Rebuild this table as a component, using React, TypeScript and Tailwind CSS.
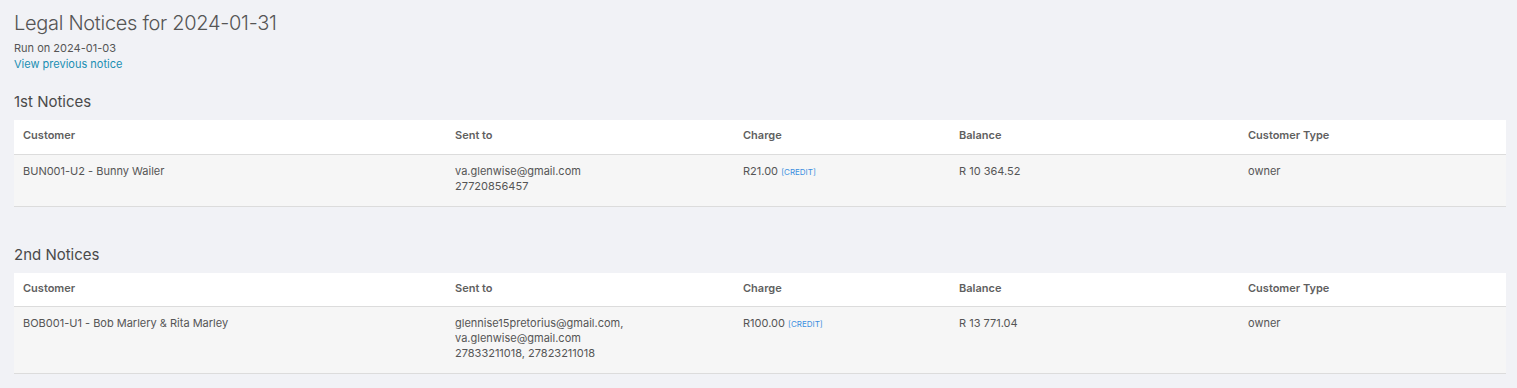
import { Fragment } from 'react';

interface NoticeRow {
  customer: string;
  sentTo: string[];
  charge: string;
  balance: string;
  customerType: string;
}

interface NoticeGroup {
  title: string;
  rows: NoticeRow[];
}

const groups: NoticeGroup[] = [
  {
    title: '1st Notices',
    rows: [
      {
        customer: 'BUN001-U2 - Bunny Wailer',
        sentTo: ['va.glenwise@gmail.com', '27720856457'],
        charge: 'R21.00',
        balance: 'R 10 364.52',
        customerType: 'owner',
      },
    ],
  },
  {
    title: '2nd Notices',
    rows: [
      {
        customer: 'BOB001-U1 - Bob Marlery & Rita Marley',
        sentTo: ['glennise15pretorius@gmail.com,', 'va.glenwise@gmail.com', '27833211018, 27823211018'],
        charge: 'R100.00',
        balance: 'R 13 771.04',
        customerType: 'owner',
      },
    ],
  },
];

const cols = ['Customer', 'Sent to', 'Charge', 'Balance', 'Customer Type'];
const widths = ['w-[432px]', 'w-[288px]', 'w-[216px]', 'w-[289px]', ''];

function NoticeTable({ group }: { group: NoticeGroup }) {
  return (
    <section>
      <h2 className="mb-[8px] text-[15px] leading-[20px] text-[#4a4a4a]">{group.title}</h2>
      <table className="w-full table-fixed border-collapse text-[11px]">
        <thead>
          <tr className="bg-white">
            {cols.map((c, i) => (
              <th
                key={c}
                className={`${widths[i]} h-[34px] px-[9px] pb-[3px] text-left align-middle font-semibold text-[#5f5f5f]`}
              >
                {c}
              </th>
            ))}
          </tr>
        </thead>
        <tbody>
          {group.rows.map((r) => (
            <tr key={r.customer} className="border-y border-[#dcdcdc] bg-[#f6f6f6] align-top text-[#555]">
              <td className="px-[9px] pt-[9px] pb-[12px] leading-[15px]">{r.customer}</td>
              <td className="px-[9px] pt-[9px] pb-[12px] leading-[15px]">
                {r.sentTo.map((s, i) => (
                  <Fragment key={s}>
                    {i > 0 && <br />}
                    {s}
                  </Fragment>
                ))}
              </td>
              <td className="px-[9px] pt-[9px] pb-[12px] leading-[15px]">
                {r.charge} <span className="text-[8px] text-[#3b8fe0]">[CREDIT]</span>
              </td>
              <td className="px-[9px] pt-[9px] pb-[12px] leading-[15px]">{r.balance}</td>
              <td className="px-[9px] pt-[9px] pb-[12px] leading-[15px]">{r.customerType}</td>
            </tr>
          ))}
        </tbody>
      </table>
    </section>
  );
}

export default function App() {
  return (
    <div className="min-h-[388px] bg-[#f1f2f6] pr-[11px] pl-[14px] pt-[8px] font-['Inter',sans-serif]">
      <h1 className="text-[20px] leading-[30px] font-light tracking-[-0.015em] text-[#555]">
        Legal Notices for 2024-01-31
      </h1>
      <p className="mt-[2px] text-[11px] leading-[16px] text-[#555]">Run on 2024-01-03</p>
      <a href="#" className="block text-[11px] leading-[16px] text-[#1b8fb3]">
        View previous notice
      </a>
      <div className="mt-[20px] flex flex-col gap-[38px]">
        {groups.map((g) => (
          <NoticeTable key={g.title} group={g} />
        ))}
      </div>
    </div>
  );
}
